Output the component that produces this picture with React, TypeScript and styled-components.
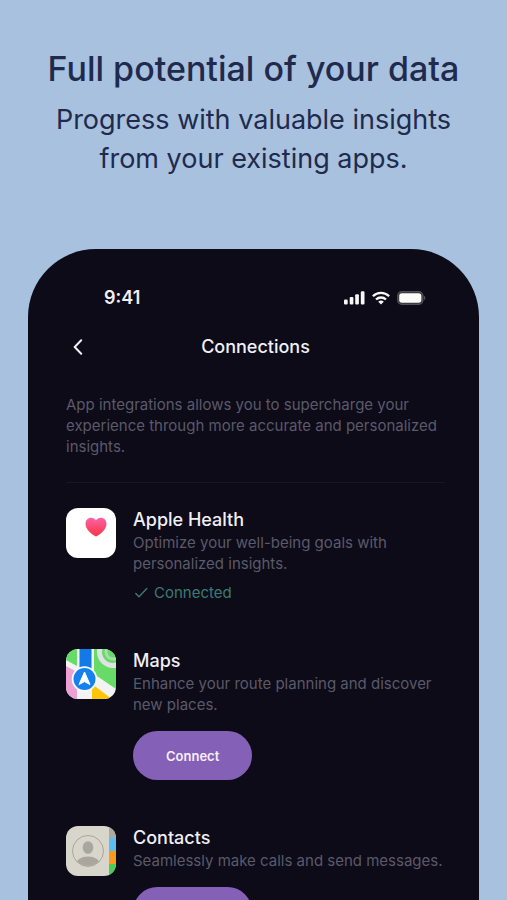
import React from "react";
import styled, { createGlobalStyle } from "styled-components";

const GlobalStyle = createGlobalStyle`
  *, *::before, *::after { box-sizing: border-box; }
  body {
    margin: 0;
    background: #a7c1de;
    font-family: Inter, "Liberation Sans", sans-serif;
  }
  h1, h2, h3, p, ul { margin: 0; padding: 0; }
`;

const Page = styled.main`
  display: flex;
  flex-direction: column;
  height: 100vh;
  overflow: hidden;
  padding: 46px 28px 0;
`;

const Hero = styled.header`
  display: flex;
  flex-direction: column;
  gap: 9px;
  text-align: center;
  color: #1f2a4d;
`;

const Headline = styled.h1`
  font-size: 34px;
  line-height: 45px;
  font-weight: 500;
`;

const Tagline = styled.p`
  max-width: 420px;
  margin: 0 auto;
  font-size: 27px;
  line-height: 39px;
`;

const Phone = styled.section`
  flex: 1;
  min-height: 0;
  overflow: hidden;
  margin-top: 71px;
  padding: 37px 34px 0 38px;
  border-radius: 68px 68px 0 0;
  background: #0c0b17;
  color: #f0eff5;
`;

const StatusBar = styled.div`
  display: flex;
  align-items: center;
  justify-content: space-between;
  height: 24px;
  padding: 0 19px 0 38px;
`;

const Time = styled.span`
  font-size: 18px;
  line-height: 24px;
  font-weight: 600;
`;

const StatusIcons = styled.div`
  display: flex;
  align-items: center;
  gap: 7px;
`;

const NavBar = styled.div`
  display: grid;
  grid-template-columns: 24px 1fr 24px;
  align-items: center;
  height: 24px;
  margin-top: 25px;
`;

const BackButton = styled.button`
  display: flex;
  align-items: center;
  justify-content: center;
  width: 24px;
  height: 24px;
  padding: 0;
  border: 0;
  background: none;
  color: inherit;
  cursor: pointer;
`;

const ScreenTitle = styled.h2`
  font-size: 18px;
  line-height: 24px;
  font-weight: 500;
  text-align: center;
`;

const BodyText = styled.p`
  font-size: 15px;
  line-height: 21px;
  color: #5b596b;
`;

const Intro = styled(BodyText)`
  padding: 35px 0 25px;
  border-bottom: 1px solid #171624;
`;

const List = styled.ul`
  display: flex;
  flex-direction: column;
  gap: 46px;
  padding-top: 25px;
  list-style: none;
`;

const Item = styled.li`
  display: grid;
  grid-template-columns: 50px 1fr;
  column-gap: 17px;
  align-items: start;
`;

const AppName = styled.h3`
  font-size: 18px;
  line-height: 24px;
  font-weight: 500;
`;

const Connected = styled.div`
  display: flex;
  align-items: center;
  gap: 5px;
  margin-top: 8px;
  font-size: 15px;
  line-height: 21px;
  color: #3c7a74;
`;

const ConnectButton = styled.button`
  display: block;
  height: 49px;
  margin-top: 16px;
  padding: 0 33px;
  border: 0;
  border-radius: 25px;
  background: #8560b7;
  color: #f6effc;
  font: 600 13px/20px Inter, "Liberation Sans", sans-serif;
  cursor: pointer;
`;

const SignalIcon = () => (
  <svg width="21" height="14" viewBox="0 0 21 14" fill="#f7f7f8" aria-hidden="true">
    <rect x="0" y="8.6" width="3.7" height="5" rx="1.1" />
    <rect x="5.7" y="6" width="3.7" height="7.6" rx="1.1" />
    <rect x="11.2" y="3.2" width="3.7" height="10.4" rx="1.1" />
    <rect x="16.8" y="0.3" width="3.7" height="13.3" rx="1.1" />
  </svg>
);

const WifiIcon = () => (
  <svg width="18" height="14" viewBox="0 0 18 14" aria-hidden="true">
    <g fill="none" stroke="#f7f7f8" strokeWidth="2.3">
      <path d="M0.9 5.2a11.6 11.6 0 0 1 16.2 0" />
      <path d="M4 8.5a7.2 7.2 0 0 1 10 0" />
    </g>
    <path d="M9 13.6 6.2 10.8a4 4 0 0 1 5.6 0Z" fill="#f7f7f8" />
  </svg>
);

const BatteryIcon = () => (
  <svg width="29" height="14" viewBox="0 0 29 14" aria-hidden="true">
    <rect x="0.8" y="0.8" width="25" height="12.4" rx="4" fill="#2b2a33" stroke="#504f57" strokeWidth="1.5" />
    <rect x="2.2" y="2.2" width="22.2" height="9.6" rx="2.7" fill="#fbfbf8" />
    <path d="M27 4.8c1.9.7 1.9 3.7 0 4.4Z" fill="#504f57" />
  </svg>
);

const BackIcon = () => (
  <svg width="10" height="16" viewBox="0 0 10 16" fill="none" aria-hidden="true">
    <path d="M8.2 1.3 1.7 8l6.5 6.7" stroke="#f0eff5" strokeWidth="2" strokeLinecap="round" strokeLinejoin="round" />
  </svg>
);

const CheckIcon = () => (
  <svg width="16" height="12" viewBox="0 0 16 12" fill="none" aria-hidden="true">
    <path d="M2.8 6.4 6 9.8 13.8 1.6" stroke="currentColor" strokeWidth="1.4" strokeLinecap="round" strokeLinejoin="round" />
  </svg>
);

const HealthIcon = () => (
  <svg width="50" height="50" viewBox="0 0 50 50" aria-hidden="true">
    <defs>
      <linearGradient id="heart" x1="0" y1="0" x2="0" y2="1">
        <stop offset="0" stopColor="#fb62a6" />
        <stop offset="1" stopColor="#fb3440" />
      </linearGradient>
    </defs>
    <rect width="50" height="50" rx="12" fill="#fff" />
    <path
      d="M30 28.6C25 25.6 19.5 21.4 19.5 15.7 19.5 12.1 22 9.7 25.1 9.7c2 0 3.9 1 4.9 2.8 1-1.8 2.9-2.8 4.9-2.8 3.1 0 5.6 2.4 5.6 6 0 5.7-5.5 9.9-10.5 12.9Z"
      fill="url(#heart)"
    />
  </svg>
);

const MapsIcon = () => (
  <svg width="50" height="50" viewBox="0 0 50 50" aria-hidden="true">
    <defs>
      <clipPath id="maps-tile">
        <rect width="50" height="50" rx="12" />
      </clipPath>
    </defs>
    <g clipPath="url(#maps-tile)">
      <rect width="50" height="50" fill="#f3f4f1" />
      <path d="M0 0H11V17L0 11Z" fill="#66db68" />
      <path d="M0 17 11 23V50H0Z" fill="#eca0d4" />
      <path d="M28 0H50V40L28 25Z" fill="#66db68" />
      <g fill="none">
        <circle cx="47" cy="3" r="13.5" stroke="#dfe2e0" strokeWidth="5" />
        <circle cx="47" cy="3" r="7" stroke="#a9dcab" strokeWidth="3" />
      </g>
      <path d="M26 35 46 50H26Z" fill="#fdc60b" />
      <rect x="13.5" width="12" height="28" fill="#1279e6" />
      <circle cx="18.5" cy="30" r="12.8" fill="#f7f9fb" />
      <circle cx="18.5" cy="30" r="11" fill="#1680ee" />
      <path d="M18.5 23 24 35.500 18.500 32.600 13 35.500Z" fill="#fff" stroke="#fff" strokeWidth="1" strokeLinejoin="round" />
    </g>
  </svg>
);

const ContactsIcon = () => (
  <svg width="50" height="50" viewBox="0 0 50 50" aria-hidden="true">
    <defs>
      <clipPath id="contacts-tile">
        <rect width="50" height="50" rx="12" />
      </clipPath>
      <clipPath id="contacts-face">
        <circle cx="22" cy="25" r="15" />
      </clipPath>
    </defs>
    <g clipPath="url(#contacts-tile)">
      <rect width="50" height="50" fill="#d8d5cb" />
      <rect x="43" width="7" height="12" fill="#aaa9a3" />
      <rect x="43" y="12" width="7" height="13" fill="#5bbdf0" />
      <rect x="43" y="25" width="7" height="13" fill="#fb9a1d" />
      <rect x="43" y="38" width="7" height="12" fill="#4ccb5d" />
      <circle cx="22" cy="25" r="15.500" fill="none" stroke="#aaa69d" strokeWidth="1" />
      <g clipPath="url(#contacts-face)" fill="#aaa69d">
        <ellipse cx="22" cy="21.500" rx="5.300" ry="6.300" />
        <ellipse cx="22" cy="38.500" rx="12" ry="8" />
      </g>
    </g>
  </svg>
);

interface Integration {
  name: string;
  description: string;
  icon: React.ReactNode;
  connected?: boolean;
}

const integrations: Integration[] = [
  {
    name: "Apple Health",
    description: "Optimize your well-being goals with personalized insights.",
    icon: <HealthIcon />,
    connected: true,
  },
  {
    name: "Maps",
    description: "Enhance your route planning and discover new places.",
    icon: <MapsIcon />,
  },
  {
    name: "Contacts",
    description: "Seamlessly make calls and send messages.",
    icon: <ContactsIcon />,
  },
];

export default function App() {
  return (
    <>
      <GlobalStyle />
      <Page>
        <Hero>
          <Headline>Full potential of your data</Headline>
          <Tagline>Progress with valuable insights from your existing apps.</Tagline>
        </Hero>
        <Phone>
          <StatusBar>
            <Time>9:41</Time>
            <StatusIcons>
              <SignalIcon />
              <WifiIcon />
              <BatteryIcon />
            </StatusIcons>
          </StatusBar>
          <NavBar>
            <BackButton type="button" aria-label="Back">
              <BackIcon />
            </BackButton>
            <ScreenTitle>Connections</ScreenTitle>
          </NavBar>
          <Intro>
            App integrations allows you to supercharge your experience through more accurate and
            personalized insights.
          </Intro>
          <List>
            {integrations.map(({ name, description, icon, connected }) => (
              <Item key={name}>
                {icon}
                <div>
                  <AppName>{name}</AppName>
                  <BodyText>{description}</BodyText>
                  {connected ? (
                    <Connected>
                      <CheckIcon />
                      Connected
                    </Connected>
                  ) : (
                    <ConnectButton type="button">Connect</ConnectButton>
                  )}
                </div>
              </Item>
            ))}
          </List>
        </Phone>
      </Page>
    </>
  );
}
